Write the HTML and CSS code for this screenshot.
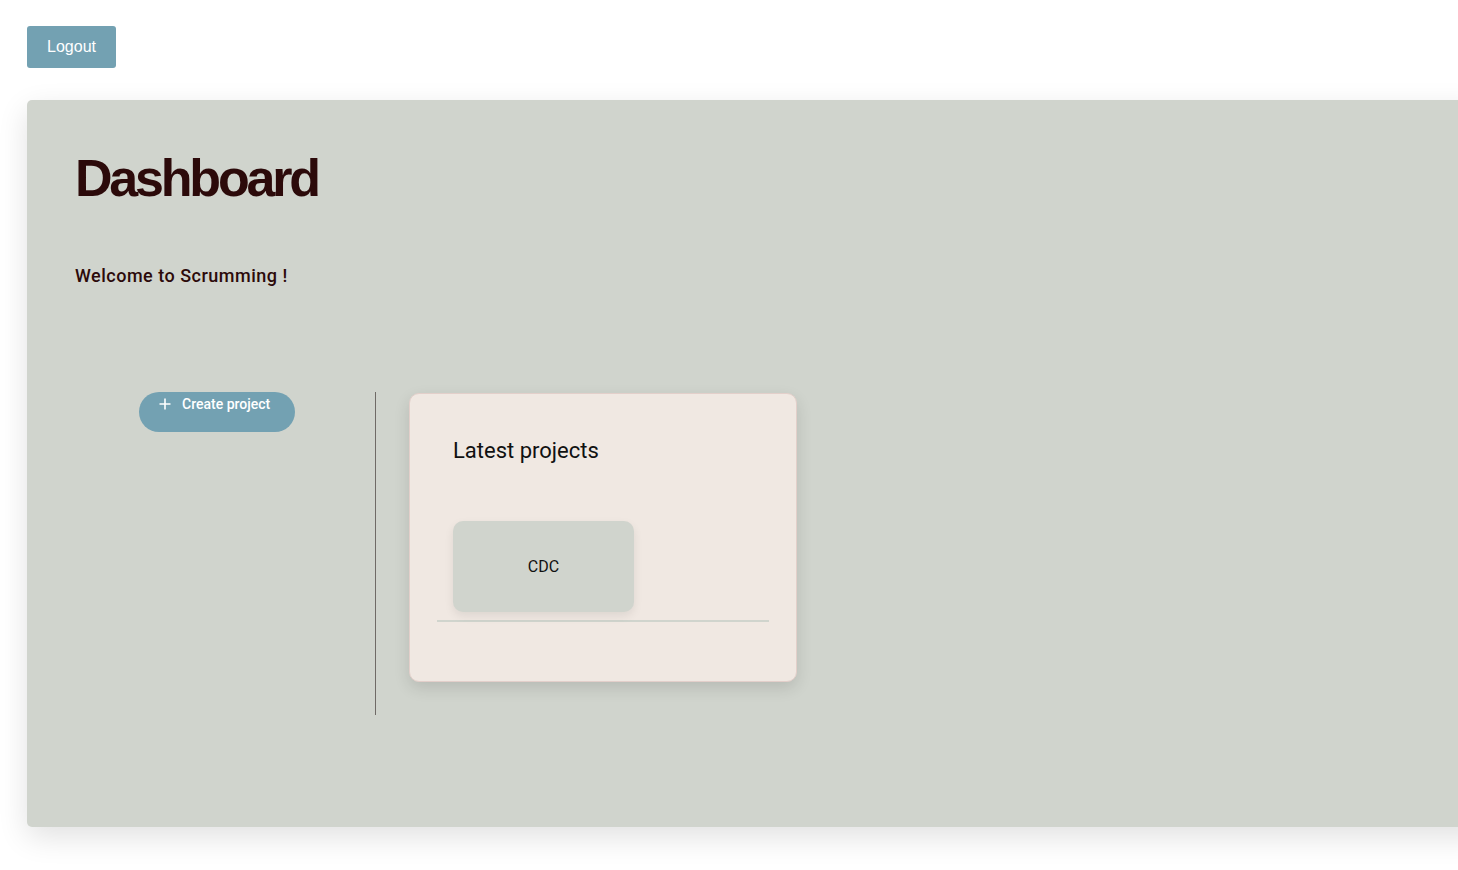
FILE: index.html
```html
<!DOCTYPE html>
<html>
<head>
<meta charset="utf-8">
<link rel="stylesheet" href="styles.css">
</head>
<body>
<button class="logout">Logout</button>
<main class="panel">
  <h1 class="title">Dashboard</h1>
  <p class="welcome">Welcome to Scrumming !</p>
  <div class="row">
    <div class="left">
      <button class="create">
        <svg class="plus" width="12" height="12" viewBox="0 0 12 12"><path d="M6 0.5v11M0.5 6h11" stroke="#fff" stroke-width="1.6" fill="none"/></svg>
        <span>Create project</span>
      </button>
    </div>
    <div class="divider"></div>
    <section class="card">
      <h2 class="card-title">Latest projects</h2>
      <div class="tiles">
        <div class="tile">CDC</div>
      </div>
      <hr class="sep">
    </section>
  </div>
</main>
</body>
</html>
```
FILE: styles.css
```css
html, body { margin: 0; padding: 0; }
body {
  background: #fff;
  font-family: Roboto, "Liberation Sans", sans-serif;
  overflow: hidden;
  width: 1458px;
  height: 870px;
}
.logout {
  display: block;
  margin: 26px 0 0 27px;
  width: 89px;
  height: 42px;
  background: #73a1b2;
  color: #fff;
  border: none;
  border-radius: 3px;
  font-family: "Liberation Sans", Arial, sans-serif;
  font-size: 16px;
  padding: 0;
}
.panel {
  margin: 32px 0 0 27px;
  width: 1460px;
  height: 727px;
  box-sizing: border-box;
  background: #d0d4cd;
  border-radius: 5px;
  box-shadow: 0 10px 30px rgba(0, 0, 0, 0.12);
  padding: 48px 0 0 48px;
}
.title {
  margin: 0;
  font-family: "Liberation Sans", Arial, sans-serif;
  font-weight: 700;
  font-size: 52px;
  letter-spacing: -3.2px;
  line-height: 60px;
  color: #2c0a0a;
}
.welcome {
  margin: 57px 0 0 0;
  font-size: 18px;
  font-weight: 500;
  letter-spacing: 0.5px;
  line-height: 22px;
  color: #2c0a0a;
}
.row {
  display: flex;
  align-items: flex-start;
  margin-top: 105px;
}
.left {
  width: 300px;
  box-sizing: border-box;
  padding-left: 64px;
}
.create {
  display: flex;
  align-items: flex-start;
  gap: 11px;
  width: 156px;
  height: 40px;
  box-sizing: border-box;
  padding: 4px 0 0 20px;
  background: #73a1b2;
  color: #fff;
  border: none;
  border-radius: 20px;
  font-family: Roboto, sans-serif;
  font-weight: 500;
  font-size: 14px;
  line-height: 16px;
}
.plus { margin-top: 2px; flex: none; }
.divider {
  width: 1px;
  height: 323px;
  background: #6f6a66;
}
.card {
  margin: 1px 0 0 33px;
  width: 388px;
  height: 289px;
  box-sizing: border-box;
  background: #f0e8e2;
  border: 1px solid #e3cfca;
  border-radius: 10px;
  box-shadow: 0 6px 16px rgba(0, 0, 0, 0.12);
  padding: 43px 27px 0 27px;
}
.card-title {
  margin: 0 0 0 16px;
  font-weight: 400;
  font-size: 22px;
  line-height: 28px;
  color: #111;
}
.tiles {
  display: flex;
  padding-left: 16px;
  margin-top: 56px;
}
.tile {
  width: 181px;
  height: 91px;
  display: flex;
  align-items: center;
  justify-content: center;
  background: #d0d4cd;
  border-radius: 10px;
  box-shadow: 0 4px 10px rgba(0, 0, 0, 0.08);
  font-size: 16px;
  color: #111;
}
.sep {
  margin: 8px 0 0 0;
  border: none;
  height: 2px;
  background: #d0d4cd;
}
```
